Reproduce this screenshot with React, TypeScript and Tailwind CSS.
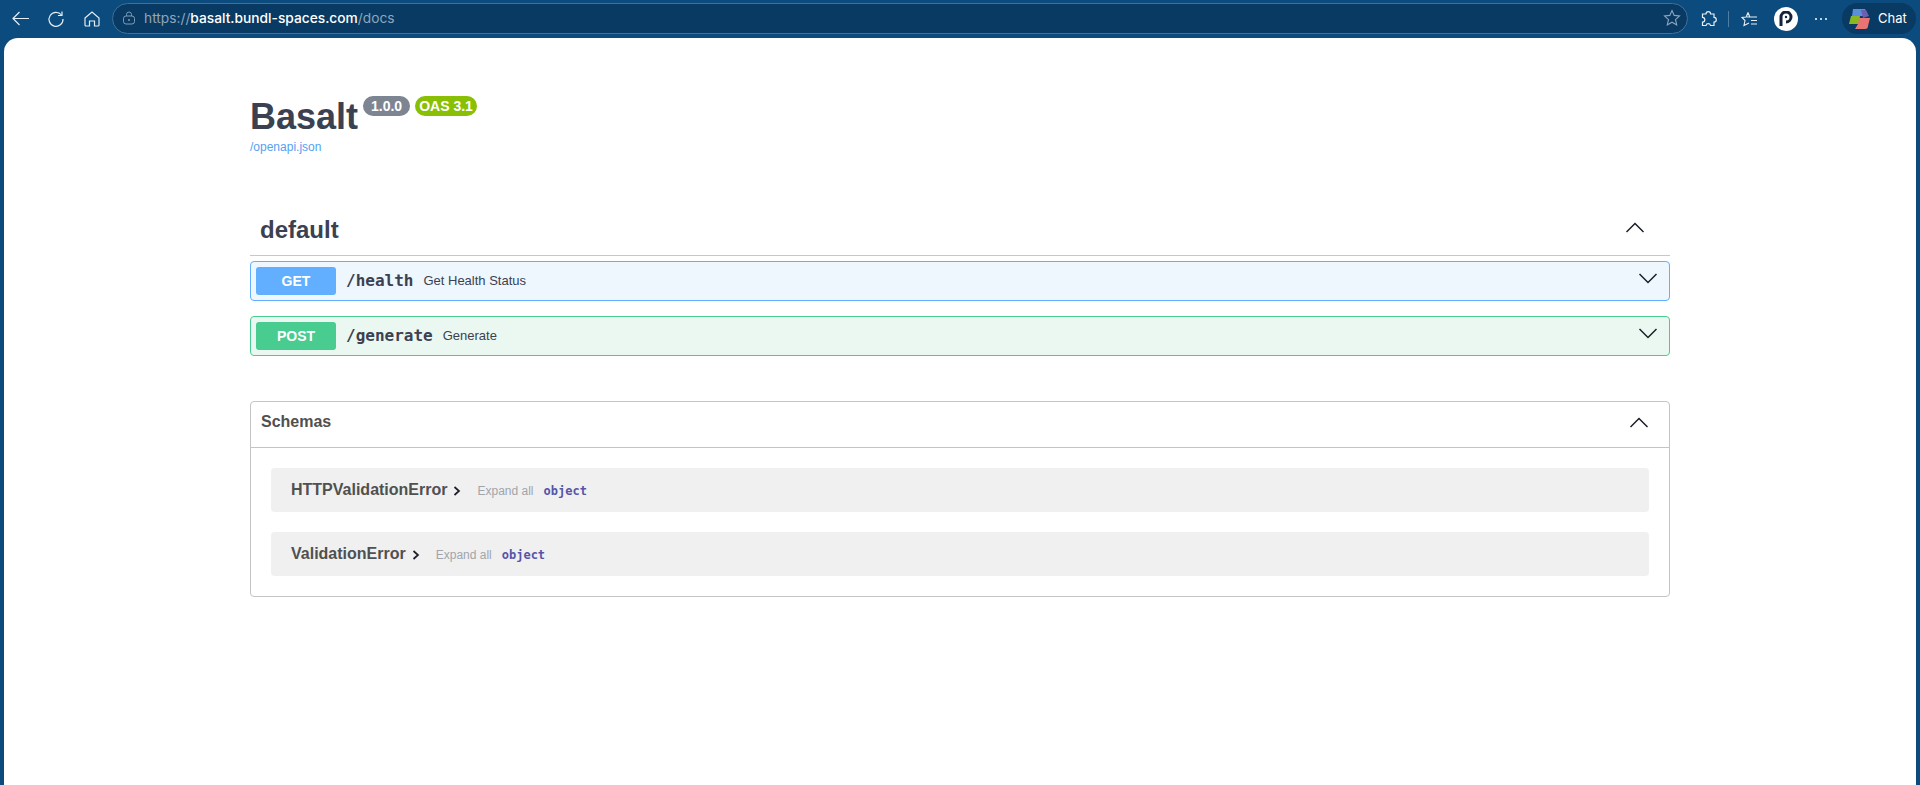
import React from "react";

const sans = "font-['Liberation_Sans',Arial,sans-serif]";
const mono = "font-['DejaVu_Sans_Mono',monospace]";

function Chevron({ up, className }: { up?: boolean; className?: string }) {
  return (
    <svg width="20" height="20" viewBox="0 0 20 20" className={className} fill="none" stroke="#1b1f27" strokeWidth="1.5">
      <path d={up ? "M1.5 14 L10 5.5 L18.5 14" : "M1.5 6 L10 14.5 L18.5 6"} />
    </svg>
  );
}

function Op({ method, path, desc, wrap, badge }: { method: string; path: string; desc: string; wrap: string; badge: string }) {
  return (
    <div className={`h-10 flex items-center rounded border pl-[5px] pr-[11px] ${wrap}`}>
      <div className={`w-20 h-7 rounded-[3px] flex items-center justify-center text-white text-sm font-bold ${badge}`}>{method}</div>
      <div className={`ml-[10px] text-base font-bold text-[#3b4151] ${mono}`}>{path}</div>
      <div className="ml-[10px] text-[13px] text-[#3b4151] flex-1">{desc}</div>
      <Chevron className="mt-[-6px]" />
    </div>
  );
}

function Model({ name }: { name: string }) {
  return (
    <div className="h-11 rounded bg-[#f0f0f0] flex items-center pl-5">
      <span className="text-base font-bold text-[#505050]">{name}</span>
      <svg width="10" height="12" viewBox="0 0 10 12" className="ml-[5px] mt-[2px]" fill="none" stroke="#1b1f27" strokeWidth="1.7">
        <path d="M2.5 2 L7 6 L2.5 10" />
      </svg>
      <span className="ml-[15px] text-xs text-[#a0a5ab] mt-[2px]">Expand all</span>
      <span className={`ml-[10px] text-xs font-bold text-[#55a] mt-[2px] ${mono}`}>object</span>
    </div>
  );
}

export default function App() {
  return (
    <div className={`h-[785px] bg-[#0c4b7d] flex flex-col overflow-hidden ${sans}`}>
      <div className="h-[38px] flex items-center shrink-0 pl-[10px]">
        <svg width="20" height="20" viewBox="0 0 20 20" fill="none" stroke="#e6edf3" strokeWidth="1.2" className="mt-[-1px] shrink-0">
          <path d="M19 9.5 H3 M9.5 3 L3 9.5 L9.5 16" />
        </svg>
        <svg width="18" height="18" viewBox="0 0 18 18" fill="none" stroke="#e6edf3" strokeWidth="1.2" className="ml-[17px] mt-[-1px] shrink-0">
          <path d="M14.5 5 A7 7 0 1 0 16 9" />
          <path d="M15 1.5 V5.5 H11" />
        </svg>
        <svg width="18" height="18" viewBox="0 0 18 18" fill="none" stroke="#e6edf3" strokeWidth="1.2" className="ml-[18px] mt-[-1px] shrink-0">
          <path d="M2 8 L9 2 L16 8 V15 a1 1 0 0 1 -1 1 H11.5 V11 H6.5 V16 H3 a1 1 0 0 1 -1 -1 Z" />
        </svg>
        <div className="ml-[11px] h-[31px] w-[1576px] shrink-0 rounded-full border border-[#3f7199] bg-[#083a63] flex items-center pl-[9px] pr-[6px] mt-[-2px]">
          <svg width="14" height="14" viewBox="0 0 14 14" fill="none" stroke="#7f9cb5" strokeWidth="1">
            <rect x="1.5" y="5" width="11" height="8" rx="2.5" />
            <path d="M4.5 5 V3.5 a2.5 2.5 0 0 1 5 0 V5" />
            <circle cx="7" cy="9" r="0.6" fill="#7f9cb5" />
          </svg>
          <span className="ml-[8px] text-[13.75px] text-[#8ea6bc] font-['Inter',sans-serif]">
            https://<span className="text-white font-medium">basalt.bundl-spaces.com</span>/docs
          </span>
          <svg width="18" height="18" viewBox="0 0 18 18" fill="none" stroke="#8ea6bc" strokeWidth="1.1" className="ml-auto">
            <path d="M9 1.5 L11.2 6.4 L16.5 7 L12.5 10.6 L13.7 16 L9 13.2 L4.3 16 L5.5 10.6 L1.5 7 L6.8 6.4 Z" />
          </svg>
        </div>
        <svg width="17" height="17" viewBox="0 0 17 17" fill="none" stroke="#e6edf3" strokeWidth="1.2" className="ml-[12px] shrink-0">
          <path d="M6 3 a2.3 2.3 0 0 1 4.6 0 H14 V6.4 a2.3 2.3 0 0 1 0 4.6 V14.5 H10.5 a2.3 2.3 0 0 0 -4.5 0 H2.5 V11 a2.3 2.3 0 0 0 0 -4.6 V3 Z" />
        </svg>
        <div className="ml-[11px] w-px h-[16px] bg-[#4d7ea3] shrink-0" />
        <svg width="17" height="17" viewBox="0 0 17 17" fill="none" stroke="#e6edf3" strokeWidth="1.1" className="ml-[12px] shrink-0">
          <path d="M7 1.5 L8.8 6 H6 M8.8 6 H16 M10 9.5 H16 M10 13 H16 M7 1.5 L5.2 6 L1 6.5 L4 9.5 L3 14.5 L8 12" />
        </svg>
        <div className="ml-[16px] w-6 h-6 rounded-full bg-white flex items-center justify-center shrink-0">
          <svg width="14" height="16" viewBox="0 0 14 16">
            <path d="M2 15 V6 a5 5 0 1 1 5 5" fill="none" stroke="#15233a" strokeWidth="3" />
            <circle cx="7" cy="6" r="1.2" fill="#15233a" />
          </svg>
        </div>
        <div className="ml-[17px] flex gap-[3px] shrink-0">
          <span className="w-[2px] h-[2px] rounded-full bg-white" />
          <span className="w-[2px] h-[2px] rounded-full bg-white" />
          <span className="w-[2px] h-[2px] rounded-full bg-white" />
        </div>
        <div className="ml-[15px] w-[74px] h-[31px] shrink-0 rounded-full bg-[#083a63] flex items-center pl-[6px] mt-[-1px]">
          <svg width="22" height="22" viewBox="0 0 22 22" className="shrink-0">
            <path d="M5 1 H17 L20 8 H4 Z" fill="#5b8fdc" />
            <path d="M13 2 H18 L21 8 L15 10 Z" fill="#6a5fb0" />
            <path d="M3 8 H12 L11 16 H1 Z" fill="#8ab820" />
            <path d="M11 10 H22 L20 18 A3 3 0 0 1 17 21 H7 L10 16 Z" fill="#ea7474" />
          </svg>
          <span className="ml-[8px] text-[13px] text-white font-['Inter',sans-serif]">Chat</span>
        </div>
      </div>

      <div className="flex-1 mx-1 bg-white rounded-t-[14px] pl-[246px] pr-[246px] text-[#3b4151]">
        <div className="pt-[51px] flex items-start">
          <h1 className="text-[36px] leading-[56px] font-bold">Basalt</h1>
          <span className="ml-[5px] mt-[7px] h-5 w-[47px] rounded-full bg-[#7d8492] text-white text-[14px] font-bold leading-5 text-center">1.0.0</span>
          <span className="ml-[5px] mt-[7px] h-5 w-[62px] rounded-full bg-[#89bf04] text-white text-[14px] font-bold leading-5 text-center">OAS 3.1</span>
        </div>
        <div className="text-xs leading-[14px] text-[#55a1f2] mt-[-5px]">/openapi.json</div>

        <div className="mt-[52px] h-[50px] pb-[2px] border-b border-[#c8c8c8] flex items-center pl-[10px]">
          <span className="text-2xl font-bold flex-1">default</span>
          <Chevron up className="mr-[25px] mt-[-4px]" />
        </div>
        <div className="mt-[5px] flex flex-col gap-[15px]">
          <Op method="GET" path="/health" desc="Get Health Status" wrap="border-[#61affe] bg-[#eef6fe]" badge="bg-[#61affe]" />
          <Op method="POST" path="/generate" desc="Generate" wrap="border-[#49cc90] bg-[#ebf8f2]" badge="bg-[#49cc90]" />
        </div>

        <div className="mt-[45px] h-[196px] rounded border border-[#c4c4c4]">
          <div className="h-[46px] border-b border-[#c4c4c4] flex items-center pl-[10px] pr-[20px]">
            <span className="text-base font-bold text-[#505050] flex-1 mt-[-5px]">Schemas</span>
            <Chevron up className="mt-[-3px]" />
          </div>
          <div className="px-5 pt-5 flex flex-col gap-5">
            <Model name="HTTPValidationError" />
            <Model name="ValidationError" />
          </div>
        </div>
      </div>
    </div>
  );
}
